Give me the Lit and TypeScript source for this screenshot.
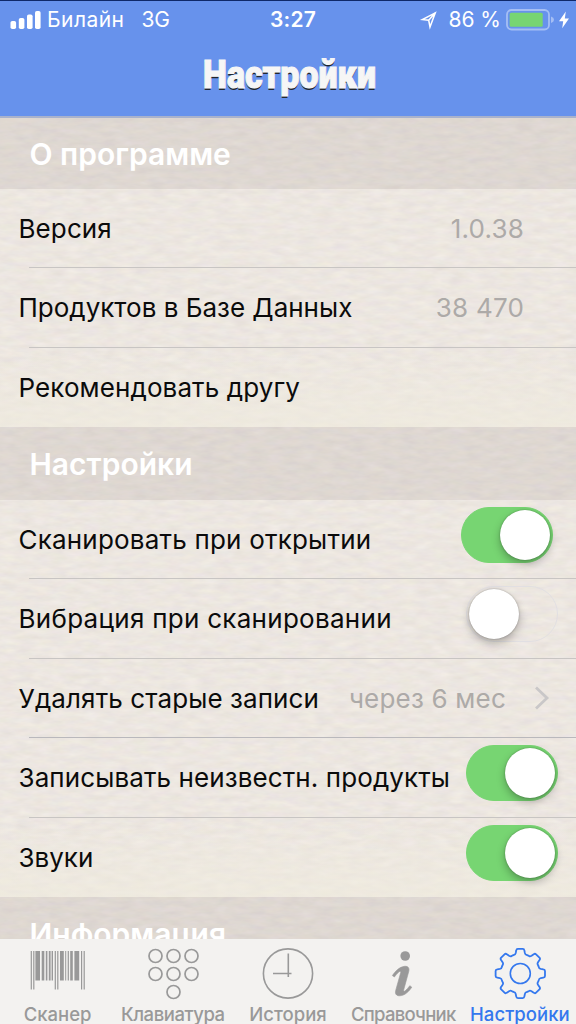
import { LitElement, html, svg, css } from "lit";
import { customElement, property } from "lit/decorators.js";

@customElement("ios-switch")
class IosSwitch extends LitElement {
  @property({ type: Boolean }) on = false;

  static styles = css`
    :host { display: block; flex: none; }
    .track {
      box-sizing: border-box;
      display: flex;
      width: 92px;
      height: 56px;
      padding: 2px;
      border-radius: 28px;
      border: 1px solid rgba(222, 221, 226, 0.8);
    }
    .track.on {
      justify-content: flex-end;
      background: #77d572;
      border-color: #77d572;
    }
    .knob {
      width: 50px;
      height: 50px;
      border-radius: 50%;
      background: #fff;
      box-shadow: 0 0 2px rgba(0, 0, 0, 0.3), 0 4px 8px rgba(0, 0, 0, 0.28);
    }
  `;

  render() {
    return html`<div class="track ${this.on ? "on" : ""}"><div class="knob"></div></div>`;
  }
}

const circles = [
  [9, 9], [27, 9], [45, 9],
  [9, 27], [27, 27], [45, 27],
  [27, 45],
];

const thinBars = [0.7, 3.2, 24.7, 27.2, 51, 53.6];
const bars: [number, number][] = [
  [5.4, 4.6], [11.7, 2.6], [15.8, 1.6], [18.8, 1.8], [21.6, 1.4],
  [30, 3.8], [35.2, 1], [37.7, 1.2], [40.2, 2.6], [44.4, 4.8],
];

function gearPath(cx: number, cy: number): string {
  const n = 8;
  const pts: string[] = [];
  const p = (r: number, deg: number) => {
    const a = ((deg - 90) * Math.PI) / 180;
    return `${(cx + r * Math.cos(a)).toFixed(2)} ${(cy + r * Math.sin(a)).toFixed(2)}`;
  };
  for (let i = 0; i < n; i++) {
    const c = (i * 360) / n;
    pts.push(`${i === 0 ? "M" : "L"}${p(23.4, c - 10)}`);
    pts.push(`Q${p(25, c - 9)} ${p(24.8, c - 5.5)}`);
    pts.push(`L${p(24.8, c + 5.5)}`);
    pts.push(`Q${p(25, c + 9)} ${p(23.4, c + 10)}`);
    pts.push(`L${p(21, c + 12.6)}`);
    pts.push(`Q${p(19.4, c + 15)} ${p(19.6, c + 18.5)}`);
    pts.push(`Q${p(19.7, c + 22.5)} ${p(19.6, c + 26.5)}`);
    pts.push(`Q${p(19.4, c + 30)} ${p(21, c + 32.4)}`);
  }
  return pts.join("") + "Z";
}

@customElement("app-root")
class AppRoot extends LitElement {
  static styles = css`
    :host {
      display: block;
      width: 576px;
      height: 1024px;
      overflow: hidden;
      font-family: Inter, "Liberation Sans", sans-serif;
      color: #0b0b0b;
    }
    .screen { display: flex; flex-direction: column; height: 1024px; }
    svg { display: block; }

    .top {
      box-sizing: border-box;
      flex: none;
      height: 118px;
      background: #6792ec;
      border-top: 1px solid #0f2869;
      border-bottom: 2px solid #a9b2cc;
      color: #fff;
    }
    .status {
      display: grid;
      grid-template-columns: 1fr auto 1fr;
      align-items: center;
      height: 37px;
      padding: 0 4px 0 10px;
      font-size: 21px;
      line-height: 37px;
      white-space: nowrap;
    }
    .left, .right { display: flex; align-items: center; }
    .right { justify-content: flex-end; }
    .carrier { margin-left: 6px; letter-spacing: 0.45px; }
    .net { margin-left: 17px; letter-spacing: 0; }
    .time { font-weight: 600; letter-spacing: 0.2px; padding-left: 4px; margin-right: -4px; padding-right: 4px; }
    .pct { margin: 0 5px 0 10px; letter-spacing: 0; }
    .title {
      margin: 0;
      text-align: center;
      font: 900 38px/75px Roboto, sans-serif;
      color: #f6f6f6;
      -webkit-text-stroke: 1.1px #f6f6f6;
      text-shadow: 0 2px 0 #20262f;
      transform: translateX(1.5px) scaleX(0.892);
    }

    .content {
      position: relative;
      flex: 1;
      min-height: 0;
      overflow: hidden;
      background: #ebe6df;
    }
    .grain { position: absolute; inset: 0; }
    .list { position: relative; display: flex; flex-direction: column; }
    .head {
      box-sizing: border-box;
      height: 72.5px;
      margin: 0;
      padding-left: 29.5px;
      font-size: 30px;
      line-height: 75px;
      font-weight: 600;
      color: #fff;
      background: rgba(120, 110, 104, 0.12);
    }
    .first { height: 70.5px; line-height: 72px; }
    .row {
      box-sizing: border-box;
      display: flex;
      align-items: center;
      height: 79.5px;
      padding: 0 18px 0 18.5px;
      font-size: 26px;
      white-space: nowrap;
    }
    .warm { background: linear-gradient(rgba(240, 236, 222, 0), rgba(240, 236, 222, 0.6)); }
    .label { flex: 1; }
    .ls1 { letter-spacing: 0.1px; }
    .ls2 { letter-spacing: 0.2px; }
    .ls3 { letter-spacing: 0.28px; }
    .value { color: #adaaa8; letter-spacing: 0.2px; }
    .static { padding-right: 52px; }
    .inset { padding-right: 23px; }
    .row ios-switch { margin-top: -9px; }
    .rule { height: 1px; margin: -1px 0 0 29px; background: #c8c5c3; }
    .strong { background: #b9b8bc; }
    .chev { margin-left: 28px; margin-right: 7px; }

    .tabs {
      box-sizing: border-box;
      flex: none;
      display: grid;
      grid-template-columns: repeat(5, 1fr);
      height: 85px;
      padding-top: 8px;
      background: #f3f2f0;
      color: #999;
    }
    .tab { display: flex; flex-direction: column; align-items: center; min-width: 0; }
    .tab svg { height: 54px; flex: none; }
    .tab span {
      font-size: 18.5px;
      line-height: 19px;
      margin-top: 4px;
      font-weight: 500;
      white-space: nowrap;
    }
    .tight span { letter-spacing: -0.45px; }
    .tighter span { letter-spacing: -0.75px; }
    .active { color: #3478ee; padding-left: 3px; }
    .active span { letter-spacing: 0.05px; }
  `;

  row(label: string, cls: string, tail: unknown, ls = "") {
    return html`<div class="row ${cls}"><span class="label ${ls}">${label}</span>${tail}</div>`;
  }

  tab(label: string, icon: unknown, cls = "") {
    return html`<div class="tab ${cls}">${icon}<span>${label}</span></div>`;
  }

  render() {
    const rule = html`<div class="rule"></div>`;
    return html`
      <div class="screen">
        <header class="top">
          <div class="status">
            <div class="left">
              <svg width="31" height="20" viewBox="0 0 31 20" fill="#fff">
                <rect x="0.5" y="11" width="5.6" height="8" rx="1.8" />
                <rect x="8.8" y="8" width="5.6" height="11" rx="1.8" />
                <rect x="17" y="4.5" width="5.6" height="14.5" rx="1.8" />
                <rect x="25" y="1" width="5.6" height="18" rx="1.8" />
              </svg>
              <span class="carrier">Билайн</span><span class="net">3G</span>
            </div>
            <span class="time">3:27</span>
            <div class="right">
              <svg width="19" height="20" viewBox="0 0 19 20" fill="none" stroke="#fff" stroke-width="1.5">
                <path d="M16.3 2.8 L3.4 9.6 L9.7 10.3 L11 17 Z M16.3 2.8 L9.7 10.3" />
              </svg>
              <span class="pct">86 %</span>
              <svg width="66" height="22" viewBox="0 0 66 22">
                <rect x="1" y="1" width="42" height="19.5" rx="4.5" fill="none" stroke="#a5bef4" stroke-width="1.8" />
                <rect x="3.7" y="3.7" width="33" height="14" rx="1.5" fill="#77d572" />
                <path d="M45 7.5 Q48 8.5 48 10.8 Q48 13 45 14 Z" fill="#a5bef4" />
                <path d="M59.8 2.5 L53 12.2 H57.2 L56.2 19.2 L63 9.6 H58.8 Z" fill="#fff" />
              </svg>
            </div>
          </div>
          <h1 class="title">Настройки</h1>
        </header>

        <main class="content">
          <svg class="grain" width="576" height="821">
            <filter id="paper" x="0" y="0" width="100%" height="100%" color-interpolation-filters="sRGB">
              <feTurbulence type="fractalNoise" baseFrequency="0.06 0.18" numOctaves="3" seed="8" />
              <feColorMatrix values="0.05 0.03 0 0 0.886  0.03 0.055 0 0 0.861  0.03 0.02 0.05 0 0.83  0 0 0 0 1" />
            </filter>
            <rect width="576" height="821" filter="url(#paper)" />
          </svg>
          <div class="list">
            <h2 class="head first">О программе</h2>
            ${this.row("Версия", "static", html`<span class="value">1.0.38</span>`, "ls1")}
            ${rule}
            ${this.row("Продуктов в Базе Данных", "static", html`<span class="value">38 470</span>`)}
            ${rule}
            ${this.row("Рекомендовать другу", "warm", "", "ls1")}
            <h2 class="head">Настройки</h2>
            ${this.row("Сканировать при открытии", "inset", html`<ios-switch on></ios-switch>`, "ls2")}
            ${rule}
            ${this.row("Вибрация при сканировании", "", html`<ios-switch></ios-switch>`, "ls3")}
            ${rule}
            ${this.row("Удалять старые записи", "", html`<span class="value">через 6 мес</span>
              <svg class="chev" width="17" height="26" viewBox="0 0 17 26" fill="none" stroke="#c9c7c8" stroke-width="2.8"><path d="M2 2.5 L13 13 L2 23.5" /></svg>`, "ls1")}
            <div class="rule strong"></div>
            ${this.row("Записывать неизвестн. продукты", "", html`<ios-switch on></ios-switch>`, "ls1")}
            ${rule}
            ${this.row("Звуки", "warm", html`<ios-switch on></ios-switch>`)}
            <h2 class="head">Информация</h2>
          </div>
        </main>

        <nav class="tabs">
          ${this.tab("Сканер", html`<svg width="56" height="54" viewBox="0 0 56 54" fill="#999">
            ${thinBars.map((x) => svg`<rect x=${x} y="4" width="1.2" height="38.5" />`)}
            ${bars.map(([x, w]) => svg`<rect x=${x} y="4" width=${w} height="29.5" />`)}
          </svg>`)}
          ${this.tab("Клавиатура", html`<svg width="54" height="54" viewBox="0 0 54 54" fill="none" stroke="#999" stroke-width="1.7">
            ${circles.map(([x, y]) => svg`<circle cx=${x + 0.5} cy=${y} r="6.5" />`)}
          </svg>`, "tight")}
          ${this.tab("История", html`<svg width="54" height="54" viewBox="0 0 54 54" fill="none" stroke="#999" stroke-width="1.6">
            <circle cx="27" cy="26.5" r="24.6" /><path d="M27.3 6.5 V30 M12 26.5 H30.5" />
          </svg>`)}
          ${this.tab("Справочник", html`<svg width="54" height="54" viewBox="0 0 54 54" fill="#999">
            <circle cx="29.2" cy="9" r="4.8" />
            <path d="M16.4 28.6 C19 24.5 23.5 19.8 28.6 19.3 C32 19 33.6 21 32.8 24.3 L27.6 43.2 C27.4 44.4 28.3 44.6 29.2 43.8 C31 42.3 32.4 40.5 33.8 38.7 L35.8 40.2 C32.8 44.6 28.8 48.6 23.7 48.8 C20.4 48.9 18.8 46.8 19.7 43.4 L24.7 25.6 C25 24.3 24 24.1 23 24.8 C21.2 26.2 19.8 28.2 18.4 30 Z" stroke="#999" stroke-width="0.6" />
          </svg>`, "tighter")}
          ${this.tab("Настройки", html`<svg width="54" height="54" viewBox="0 0 54 54" fill="none" stroke="#3478ee" stroke-width="1.8">
            <path d=${gearPath(27.3, 26.5)} /><circle cx="27.3" cy="26.5" r="10" stroke-width="1.6" />
          </svg>`, "active")}
        </nav>
      </div>
    `;
  }
}
